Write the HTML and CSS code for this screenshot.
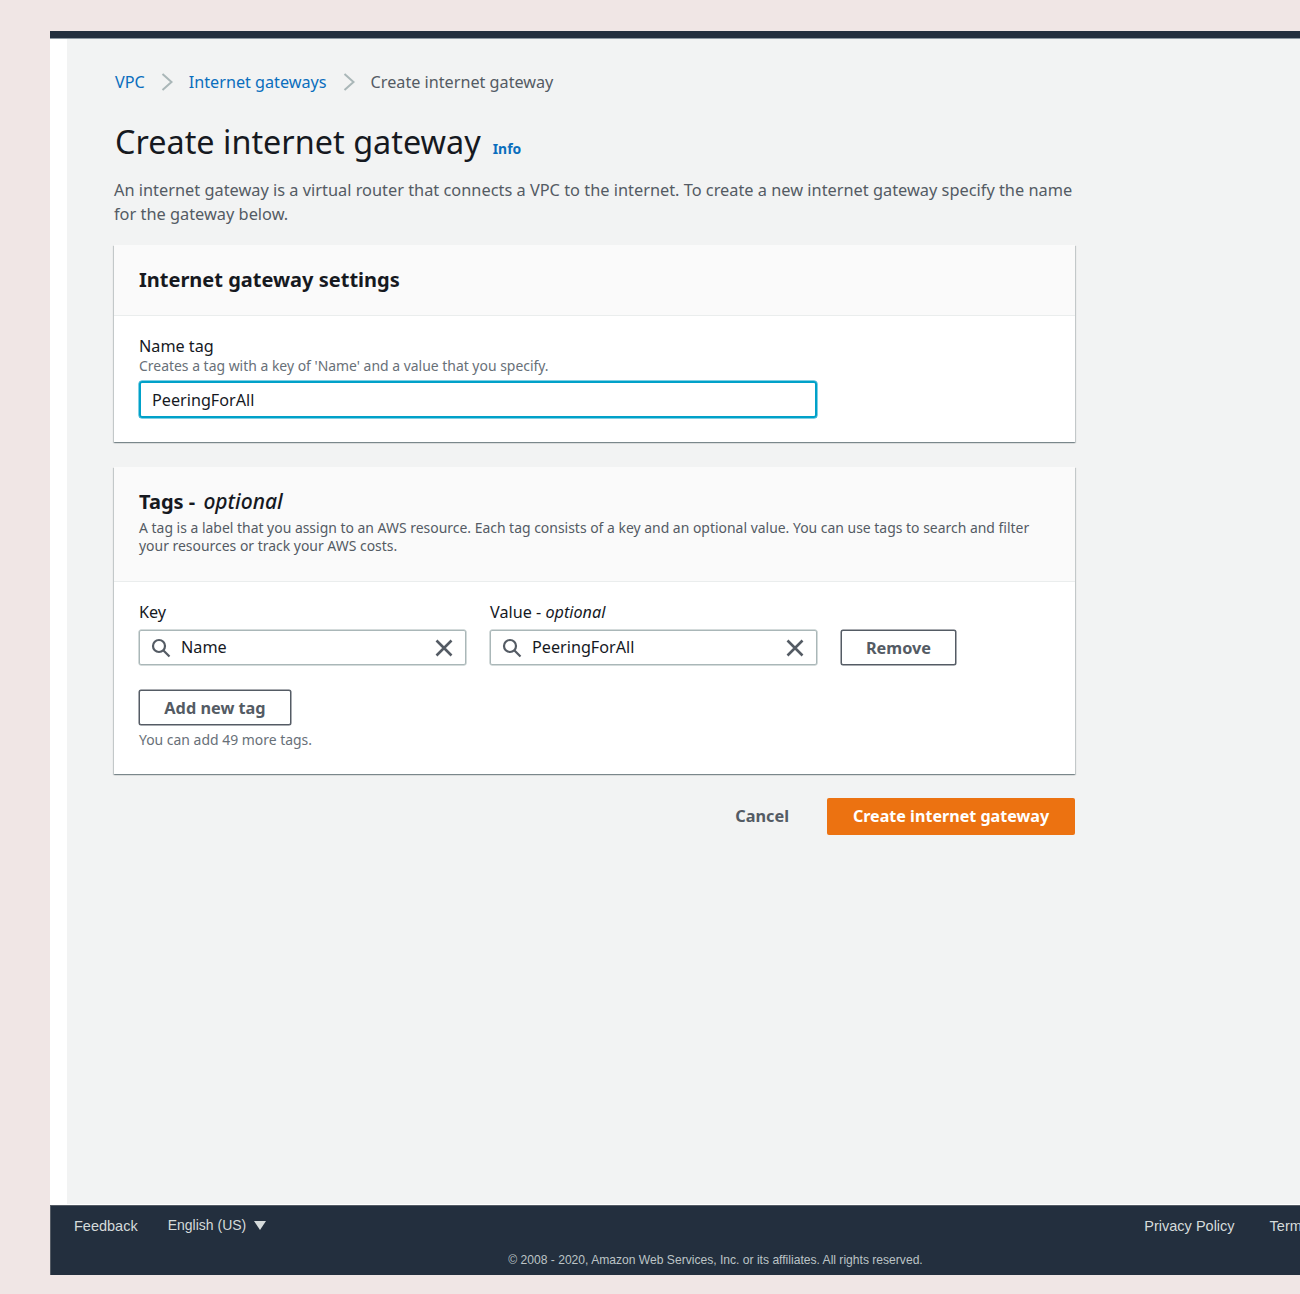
FILE: index.html
```html
<!DOCTYPE html>
<html lang="en">
<head>
  <meta charset="UTF-8" />
  <title>Create internet gateway</title>
  <link rel="stylesheet" href="styles.css">
</head>
<body>

<div class="frame">
  <div class="topbar"></div>

  <div class="shell">
    <div class="side"></div>
    <main class="main">
      <nav class="crumbs">
        <a href="#">VPC</a>
        <svg class="crumb-sep" viewBox="0 0 11 18"><path d="M1 1l9 8-9 8"/></svg>
        <a href="#">Internet gateways</a>
        <svg class="crumb-sep" viewBox="0 0 11 18"><path d="M1 1l9 8-9 8"/></svg>
        <span>Create internet gateway</span>
      </nav>

      <div class="title-row">
        <h1>Create internet gateway</h1>
        <a class="info" href="#">Info</a>
      </div>
      <p class="intro">An internet gateway is a virtual router that connects a VPC to the internet. To create a new internet gateway specify the name for the gateway below.</p>

      <section class="card">
        <header class="card-head">
          <h2>Internet gateway settings</h2>
        </header>
        <div class="card-body name-body">
          <div class="label">Name tag</div>
          <div class="hint">Creates a tag with a key of 'Name' and a value that you specify.</div>
          <div class="name-input">PeeringForAll</div>
        </div>
      </section>

      <section class="card">
        <header class="card-head tags-head">
          <h2>Tags - <em>optional</em></h2>
          <p>A tag is a label that you assign to an AWS resource. Each tag consists of a key and an optional value. You can use tags to search and filter your resources or track your AWS costs.</p>
        </header>
        <div class="card-body tags-body">
          <div class="tag-row">
            <div class="tag-field">
              <div class="label">Key</div>
              <div class="search">
                <svg class="icon" viewBox="0 0 20 20"><circle cx="8" cy="8" r="6"/><path d="M12.500 12.500l6 6"/></svg>
                <span>Name</span>
                <svg class="icon close" viewBox="0 0 20 20"><path d="M2.500 2.500l15 15M17.500 2.500l-15 15"/></svg>
              </div>
            </div>
            <div class="tag-field">
              <div class="label">Value - <em>optional</em></div>
              <div class="search">
                <svg class="icon" viewBox="0 0 20 20"><circle cx="8" cy="8" r="6"/><path d="M12.500 12.500l6 6"/></svg>
                <span>PeeringForAll</span>
                <svg class="icon close" viewBox="0 0 20 20"><path d="M2.500 2.500l15 15M17.500 2.500l-15 15"/></svg>
              </div>
            </div>
            <button class="btn remove">Remove</button>
          </div>
          <button class="btn add">Add new tag</button>
          <div class="hint more">You can add 49 more tags.</div>
        </div>
      </section>

      <div class="actions">
        <a class="cancel" href="#">Cancel</a>
        <button class="btn primary">Create internet gateway</button>
      </div>
    </main>
  </div>

  <footer class="footer">
    <div class="footer-row">
      <a href="#">Feedback</a>
      <span class="lang">English (US) <i class="caret"></i></span>
      <div class="footer-right">
        <a href="#">Privacy Policy</a>
        <a href="#">Terms of Use</a>
      </div>
    </div>
    <div class="copyright">© 2008 - 2020, Amazon Web Services, Inc. or its affiliates. All rights reserved.</div>
  </footer>
</div>

</body>
</html>
```

FILE: styles.css
```css
html, body { margin: 0; height: 100%; }
body {
  background: #f0e6e5;
  font-family: "Noto Sans", sans-serif;
  color: #16191f;
  overflow: hidden;
  padding: 31px 0 0 50px;
  box-sizing: border-box;
}
a { color: #0a6ebd; text-decoration: none; }
h1, h2, p { margin: 0; }

.frame { width: 1330px; }
.topbar { height: 7px; background: #232f3e; box-shadow: 0 1px 0 #8d99a3; position: relative; }

.shell { display: flex; height: 1167px; background: #fff; }
.side { width: 17px; flex: none; }
.main {
  flex: 1;
  background: #f2f3f3;
  padding: 0 0 0 47px;
  margin-bottom: 1px;
}
.main > * { width: 961px; box-sizing: border-box; }

.crumbs {
  display: flex;
  align-items: center;
  gap: 16px;
  height: 24px;
  margin-top: 32px;
  padding-left: 1px;
  font-size: 16.200px;
  color: #545b64;
}
.crumb-sep { width: 12px; height: 18px; fill: none; stroke: #aab7b8; stroke-width: 2; }

.title-row { display: flex; align-items: baseline; gap: 12px; margin-top: 25px; padding-left: 1px; }
h1 { font-size: 32.400px; font-weight: 400; line-height: 44px; }
.info { font-size: 13.900px; font-weight: 700; }

.intro { margin-top: 15px; font-size: 16.350px; line-height: 24px; color: #545b64; }

.card {
  background: #fff;
  margin-top: 19px;
  box-shadow: 0 1px 1px 0 rgba(0,28,36,.3), 1px 1px 1px 0 rgba(0,28,36,.15), -1px 1px 1px 0 rgba(0,28,36,.15);
}
.card + .card { margin-top: 25px; }
.card-head {
  background: #fafafa;
  border-bottom: 1px solid #eaeded;
  padding: 19px 25px 19px;
}
.card-head h2 { font-size: 20px; font-weight: 700; line-height: 32px; }
.card-head h2 em { margin-left: 3px; font-size: 21px; font-weight: 500; }
.card-body { padding: 0 25px; }
.name-body { padding-top: 19px; padding-bottom: 24px; }

.label { font-size: 16.200px; line-height: 22px; }
.hint { font-size: 13.950px; line-height: 18px; color: #687078; }

.name-input {
  box-sizing: border-box;
  width: 678px;
  height: 37px;
  margin-top: 6px;
  padding: 0 11px;
  border: 2px solid #00a1c9;
  border-radius: 3px;
  box-shadow: 0 0 0 0.5px #00a1c9;
  font-size: 16.200px;
  line-height: 35px;
}

.tags-head { padding: 18px 25px 26px; }
.tags-head p { margin-top: 1px; font-size: 13.950px; line-height: 18px; color: #545b64; }
.tags-body { padding-top: 19px; padding-bottom: 25px; }

.tag-row { display: flex; align-items: flex-end; gap: 24px; }
.tag-field { width: 327px; }
.tag-field .label { margin-bottom: 7px; }
.search {
  box-sizing: border-box;
  display: flex;
  align-items: center;
  gap: 10px;
  height: 35px;
  padding: 0 11px;
  border: 1px solid #aab7b8;
  border-radius: 2px;
  box-shadow: 0 0 0 0.5px #aab7b8;
  font-size: 16.200px;
}
.search span { flex: 1; padding-bottom: 2px; }
.icon { width: 20px; height: 20px; fill: none; stroke: #545b64; stroke-width: 2.200; }
.close { stroke-width: 2.600; }

.btn {
  box-sizing: border-box;
  font-family: inherit;
  font-size: 16.300px;
  font-weight: 700;
  color: #545b64;
  background: #fff;
  border: 1px solid #545b64;
  border-radius: 2px;
  box-shadow: 0 0 0 0.5px #545b64;
  height: 35px;
  padding: 0 24px;
  cursor: pointer;
}
.remove { width: 115px; padding: 0; }
.add { display: block; width: 152px; padding: 0; margin-top: 25px; }
.more { margin-top: 6px; }

.actions {
  display: flex;
  justify-content: flex-end;
  align-items: center;
  gap: 38px;
  margin-top: 24px;
}
.cancel { margin-top: -2px; font-size: 16.300px; font-weight: 700; color: #545b64; }
.primary {
  width: 248px;
  height: 37px;
  padding: 0 0 2px;
  font-size: 16.100px;
  color: #fff;
  background: #ec7211;
  border: none;
  box-shadow: none;
}

.footer {
  height: 70px;
  box-sizing: border-box;
  background: #232f3e;
  border-top: 1px solid #545b64;
  border-left: 1px solid #545b64;
  color: #d5dbdb;
  font-family: "Liberation Sans", sans-serif;
}
.footer a { color: #d5dbdb; }
.footer-row { display: flex; align-items: center; height: 39px; padding: 0 25px 0 23px; font-size: 14.500px; }
.lang { margin-left: 30px; margin-top: -2px; font-size: 14px; }
.caret {
  display: inline-block;
  border-left: 6px solid transparent;
  border-right: 6px solid transparent;
  border-top: 9px solid #d5dbdb;
  margin-left: 4px;
}
.footer-right { margin-left: auto; display: flex; gap: 35px; }
.copyright { text-align: center; font-size: 12.100px; line-height: 30px; color: #bcc4c6; }
```
